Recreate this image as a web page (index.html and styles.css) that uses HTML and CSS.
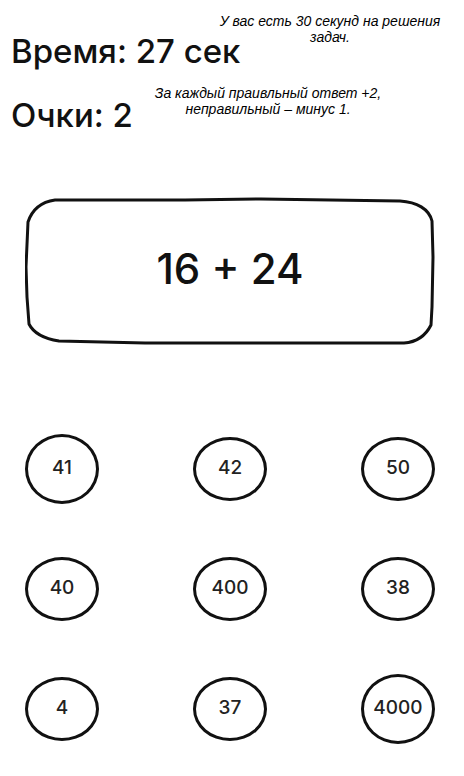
FILE: index.html
```html
<!DOCTYPE html>
<html lang="ru">
<head>
<meta charset="utf-8">
<meta name="viewport" content="width=device-width, initial-scale=1">
<title>Решение задач</title>
<link rel="stylesheet" href="styles.css">
</head>
<body>
<main class="game">
  <header class="status">
    <div class="status-row status-row-time">
      <p class="stat">Время: 27 сек</p>
      <p class="note">У вас есть 30 секунд на решения задач.</p>
    </div>
    <div class="status-row status-row-score">
      <p class="stat">Очки: 2</p>
      <p class="note">За каждый праивльный ответ +2, неправильный – минус 1.</p>
    </div>
  </header>
  <section class="task">
    <svg class="task-frame" viewBox="0 0 410 148" preserveAspectRatio="none" aria-hidden="true">
      <path d="M30 3 L160 3 L236 2 L375 4 C392 5 404 12 407 24 L408 60 L407 110 L406 128 C401 138 393 145 379 146 L230 146 L120 146 L34 144 C21 142 9 137 4 127 L2 100 L1 70 L3 25 C7 13 16 5 30 3 Z"/>
    </svg>
    <h1 class="question">16 + 24</h1>
  </section>
  <section class="answers" aria-label="Ответы">
    <button class="answer answer-round" type="button">41</button>
    <button class="answer" type="button">42</button>
    <button class="answer" type="button">50</button>
    <button class="answer" type="button">40</button>
    <button class="answer" type="button">400</button>
    <button class="answer" type="button">38</button>
    <button class="answer" type="button">4</button>
    <button class="answer" type="button">37</button>
    <button class="answer answer-round" type="button">4000</button>
  </section>
</main>
</body>
</html>
```
FILE: styles.css
```css
* {
  box-sizing: border-box;
}

body {
  margin: 0;
  background: #fff;
  color: #111;
  font-family: Inter, "Open Sans", sans-serif;
}

p,
h1 {
  margin: 0;
}

.game {
  padding: 13px 0 31px;
}

.status {
  display: grid;
  gap: 8px;
  padding-left: 11px;
}

.status-row {
  display: flex;
  align-items: flex-start;
  justify-content: space-between;
}

.status-row-time {
  padding-right: 16px;
}

.status-row-score {
  padding-right: 78px;
}

.stat {
  padding-top: 12px;
  font-size: 33px;
  font-weight: 500;
  line-height: 52px;
  white-space: nowrap;
}

.status-row-score .stat {
  padding-top: 4px;
}

.note {
  width: 236px;
  color: #000;
  font: italic 14px/16px "Liberation Sans", sans-serif;
  text-align: center;
}

.status-row-time .note {
  margin-left: -32px;
}

.task {
  position: relative;
  display: grid;
  place-items: center;
  min-height: 148px;
  margin: 56px 29px 0 25px;
  padding-bottom: 4px;
}

.task-frame {
  position: absolute;
  inset: 0;
  width: 100%;
  height: 100%;
  fill: none;
  stroke: #111;
  stroke-width: 3;
  stroke-linejoin: round;
}

.question {
  font-size: 42px;
  font-weight: 500;
  line-height: 48px;
}

.answers {
  display: grid;
  grid-template-columns: repeat(3, 74px);
  grid-auto-rows: 72px;
  row-gap: 48px;
  justify-content: space-between;
  align-items: center;
  margin: 88px 29px 0 25px;
}

.answer {
  height: 64px;
  padding: 0 0 2px;
  border: 3px solid #111;
  border-radius: 50%;
  background: transparent;
  color: #222;
  font: 500 19px/24px Inter, "Open Sans", sans-serif;
  cursor: pointer;
}

.answer-round {
  height: 70px;
}
```
